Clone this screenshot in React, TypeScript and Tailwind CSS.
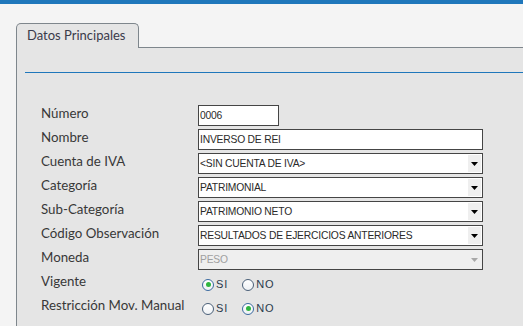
import React from 'react';

type Field = {
  label: string;
  value: string;
  kind: 'text' | 'select';
  width?: string;
  disabled?: boolean;
};

const fields: Field[] = [
  { label: 'Número', value: '0006', kind: 'text', width: 'w-[81px]' },
  { label: 'Nombre', value: 'INVERSO DE REI', kind: 'text' },
  { label: 'Cuenta de IVA', value: '<SIN CUENTA DE IVA>', kind: 'select' },
  { label: 'Categoría', value: 'PATRIMONIAL', kind: 'select' },
  { label: 'Sub-Categoría', value: 'PATRIMONIO NETO', kind: 'select' },
  { label: 'Código Observación', value: 'RESULTADOS DE EJERCICIOS ANTERIORES', kind: 'select' },
  { label: 'Moneda', value: 'PESO', kind: 'select', disabled: true },
];

const labelClass = "w-[157px] pb-[5px] text-[13.3px] leading-[16px] text-[#383838] [font-family:Lato,'Noto_Sans',sans-serif]";
const inputFont = "text-[10.3px] tracking-[-0.2px] [font-family:'Liberation_Sans',Arial,sans-serif]";

function Caret({ disabled }: { disabled?: boolean }) {
  return (
    <div className="flex h-[17px] w-[13px] items-center justify-center bg-[#efefef]">
      <svg width="7" height="4" viewBox="0 0 7 4">
        <path d="M0 0H7L3.5 4Z" fill={disabled ? '#a8a8a8' : '#000'} />
      </svg>
    </div>
  );
}

function Radio({ label, checked }: { label: string; checked?: boolean }) {
  return (
    <div className="flex items-center gap-[2px]">
      <div
        className={`flex h-[12px] w-[12px] items-center justify-center rounded-full border bg-gradient-to-b from-white to-[#eef1f4] ${
          checked ? 'border-[#3b6aa0]' : 'border-[#4a5f78]'
        }`}
      >
        {checked && <div className="h-[5px] w-[5px] rounded-full bg-[#2fb53f]" />}
      </div>
      <span className={`text-[11px] leading-none tracking-[0.9px] text-[#2a3a4c] ${inputFont}`}>{label}</span>
    </div>
  );
}

export default function App() {
  return (
    <div className="h-[326px] w-[523px] overflow-hidden bg-[#f4f4f4]">
      <div className="h-[4px] bg-[#1f77bb]" />
      <div className="pl-[16px] pt-[19px]">
        <div className="flex">
          <div className="flex h-[25px] w-[123px] items-center rounded-t-[5px] border border-b-0 border-[#7e868c] bg-[#e5e5e5] pl-[10px] text-[13px] text-[#3a3a4a] [font-family:Lato,'Noto_Sans',sans-serif]">
            Datos Principales
          </div>
          <div className="h-[25px] flex-1 border-b border-[#7e868c]" />
        </div>
        <div className="h-[280px] border-l border-[#7e868c] bg-[#e5e5e5] pl-[8px] pt-[24px]">
          <div className="h-px bg-[#1f77bb]" />
          <div className="mt-[32px] flex flex-col gap-[3px] pl-[16px]">
            {fields.map((f) => (
              <div key={f.label} className="flex h-[21px] items-center">
                <div className={labelClass}>{f.label}</div>
                <div
                  className={`flex h-[21px] items-center border border-[#454545] ${f.width ?? 'w-[285px]'} ${
                    f.disabled ? 'border-[#7a7a7a] bg-[#efefef]' : 'bg-white'
                  }`}
                >
                  <span className={`flex-1 truncate pl-[1px] ${inputFont} ${f.disabled ? 'text-[#a0a0a0]' : 'text-[#2a2a2a]'}`}>
                    {f.value}
                  </span>
                  {f.kind === 'select' && (
                    <div className="pr-[1px]">
                      <Caret disabled={f.disabled} />
                    </div>
                  )}
                </div>
              </div>
            ))}
            <div className="flex h-[21px] items-center">
              <div className={labelClass}>Vigente</div>
              <div className="flex gap-[14px] pl-[4px] pt-[2px]">
                <Radio label="SI" checked />
                <Radio label="NO" />
              </div>
            </div>
            <div className="flex h-[21px] items-center">
              <div className={labelClass}>Restricción Mov. Manual</div>
              <div className="flex gap-[14px] pl-[4px] pt-[2px]">
                <Radio label="SI" />
                <Radio label="NO" checked />
              </div>
            </div>
          </div>
        </div>
      </div>
    </div>
  );
}
